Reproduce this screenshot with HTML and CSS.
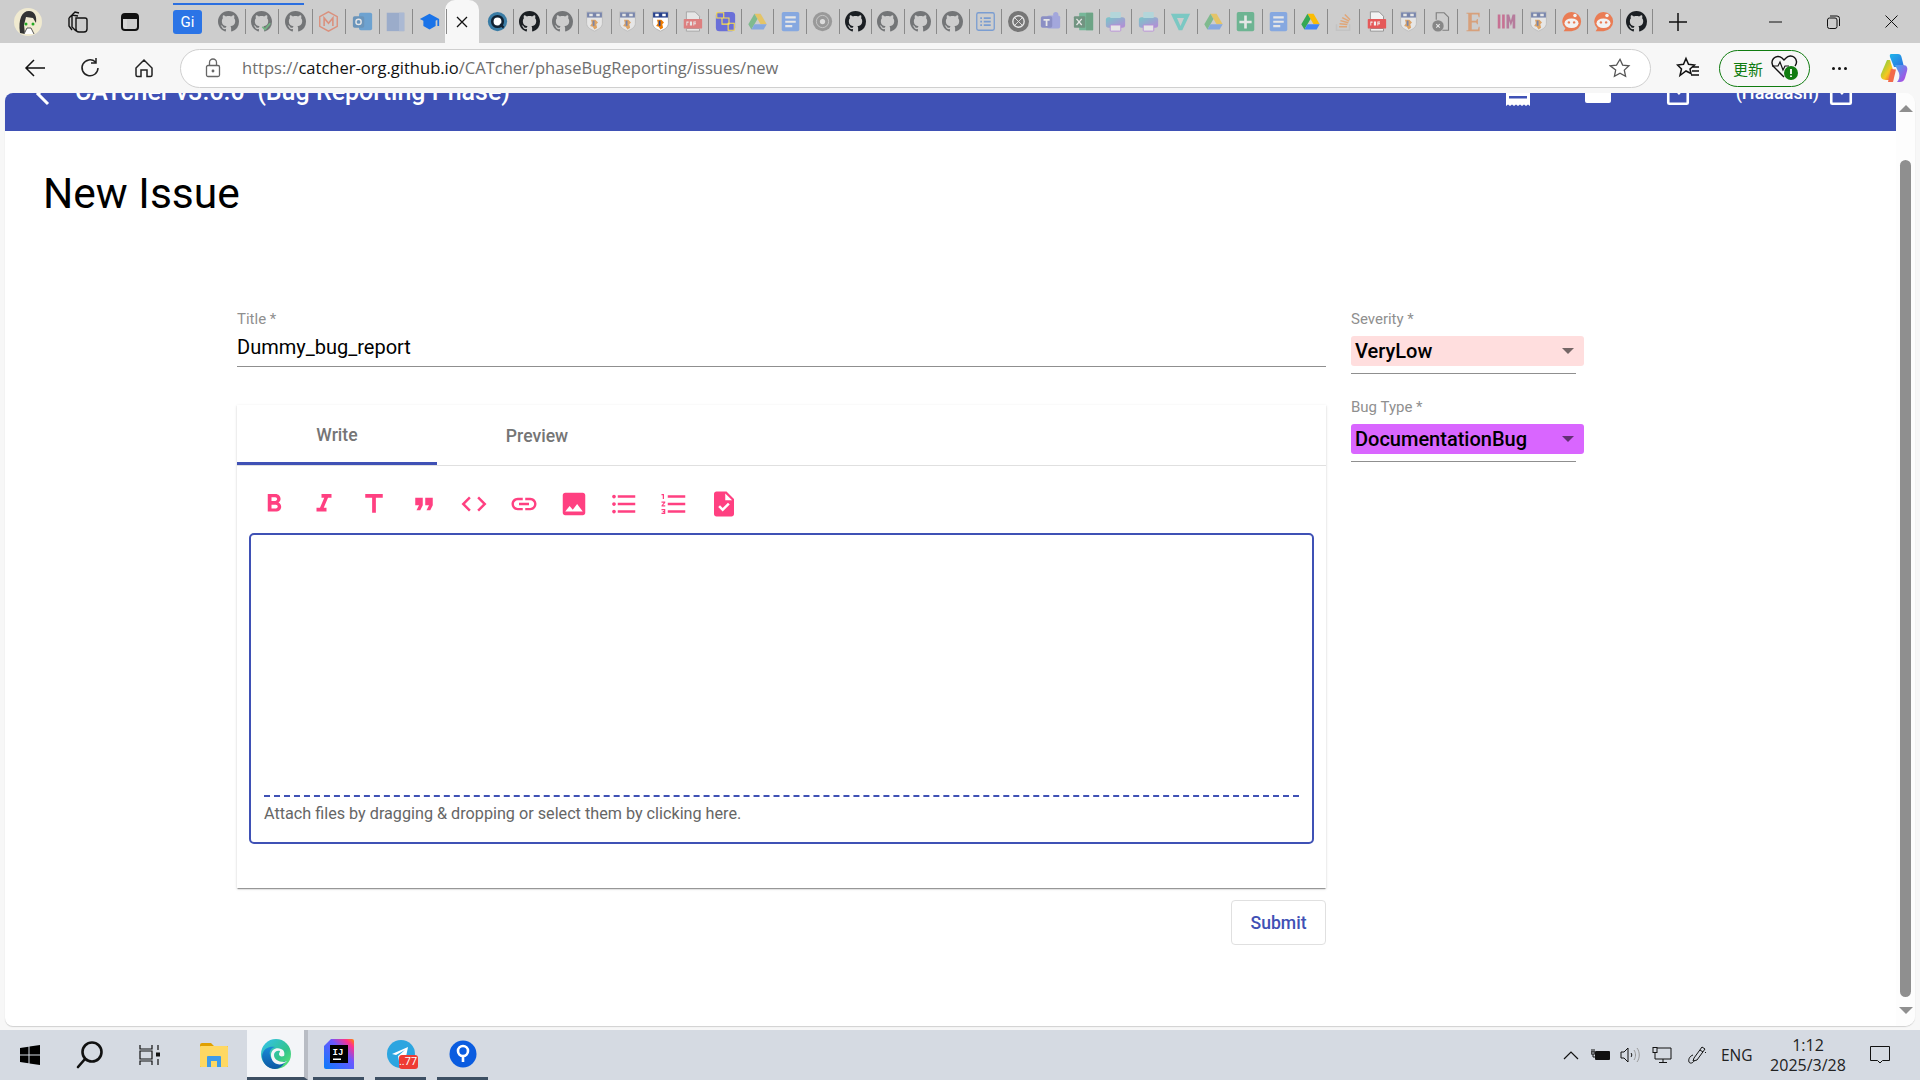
FILE: index.html
```html
<!DOCTYPE html>
<html lang="en">
<head>
    <meta charset="UTF-8">
    <title>CATcher</title>
    <link rel="stylesheet" href="styles.css">
</head>
<body>

<svg class="sprites" xmlns="http://www.w3.org/2000/svg">
    <symbol id="gh" viewBox="0 0 16 16"><path d="M8 0C3.58 0 0 3.58 0 8c0 3.54 2.29 6.53 5.47 7.59.4.07.55-.17.55-.38 0-.19-.01-.82-.01-1.49-2.01.37-2.53-.49-2.69-.94-.09-.23-.48-.94-.82-1.13-.28-.15-.68-.52-.01-.53.63-.01 1.08.58 1.23.82.72 1.21 1.87.87 2.33.66.07-.52.28-.87.51-1.07-1.78-.2-3.64-.89-3.64-3.95 0-.87.31-1.59.82-2.15-.08-.2-.36-1.02.08-2.12 0 0 .67-.21 2.2.82.64-.18 1.32-.27 2-.27s1.36.09 2 .27c1.53-1.04 2.2-.82 2.2-.82.44 1.1.16 1.92.08 2.12.51.56.82 1.27.82 2.15 0 3.07-1.87 3.75-3.65 3.95.29.25.54.73.54 1.48 0 1.07-.01 1.93-.01 2.2 0 .21.15.46.55.38A8.013 8.013 0 0016 8c0-4.42-3.58-8-8-8z"/></symbol>
    <symbol id="crest" viewBox="0 0 24 24"><path d="M3 1h18v13c0 5-5 7-9 9-4-2-9-4-9-9z" fill="#fff" stroke="#aaa"/><path d="M3.500 1.500h17v6h-17z" fill="#27408b"/><path d="M6 3h4v3H6zM14 3h4v3h-4z" fill="#fff"/><path d="M8 10h5l3 3-2 2 1 4-3 2-2-3-3-1 2-3z" fill="#ef7c00"/><path d="M10 11h2v6h-2z" fill="#27408b"/></symbol>
    <symbol id="pdf" viewBox="0 0 24 24"><path d="M5 1h10l5 5v5H5zM5 20h15v3H5z" fill="#fff" stroke="#777"/><rect x="2" y="9" width="21" height="11" rx="1" fill="#e33"/><path d="M5 12h2.500v1.500H6v3H5zM9 12h2.500v4.500H9zM13 12h3v1h-2v1h2v1h-2v1.500h-1z" fill="#fff"/></symbol>
    <symbol id="drive" viewBox="0 0 24 24"><path d="M8.500 3h7l7 12h-7z" fill="#fbbc04"/><path d="M8.500 3l-7 12 3.500 6 7-12z" fill="#34a853"/><path d="M5 21h14l3.500-6H8.500z" fill="#4285f4"/></symbol>
    <symbol id="docs" viewBox="0 0 24 24"><rect x="2" y="1" width="20" height="22" rx="2" fill="#4285f4"/><path d="M6 6h12v2.500H6zM6 11h12v2.500H6zM6 16h8v2.500H6z" fill="#fff"/></symbol>
    <symbol id="printer" viewBox="0 0 24 24"><rect x="1" y="7" width="22" height="12" rx="3" fill="url(#printgrad)"/><rect x="6" y="1" width="12" height="7" rx="1" fill="#9adfe8"/><rect x="6" y="16" width="12" height="7" rx="1" fill="#fff" stroke="#a04ae0"/></symbol>
    <symbol id="reddit" viewBox="0 0 24 24"><path d="M12 1a11 11 0 110 22H3l2-3A11 11 0 0112 1z" fill="#f4622c"/><ellipse cx="12" cy="14" rx="8" ry="5.500" fill="#fff"/><circle cx="9" cy="13" r="1.400" fill="#f4622c"/><circle cx="15" cy="13" r="1.400" fill="#f4622c"/><circle cx="16" cy="5" r="2" fill="#fff"/></symbol>
    <symbol id="outline-box" viewBox="0 0 24 24"><path d="M13 3H4a1 1 0 00-1 1v16a1 1 0 001 1h16a1 1 0 001-1v-9" fill="none" stroke="#fff" stroke-width="2.400"/><path d="M21 3l-9 9M14 3h7v7" fill="none" stroke="#fff" stroke-width="2.400"/></symbol>
    <defs>
        <linearGradient id="printgrad" x1="0" y1="0" x2="1" y2="1"><stop offset="0" stop-color="#27c4c4"/><stop offset="1" stop-color="#a04ae0"/></linearGradient>
    </defs>
</svg>

<div class="tabstrip">
    <div class="profile">
        <svg width="30" height="30" viewBox="0 0 30 30"><circle cx="15" cy="15" r="14" fill="#f0ead0"/><path d="M7 26C5 12 9 4 16 4c6 0 8 6 7 12l-3-5-7-1-2 8 1 9z" fill="#333"/><circle cx="13" cy="17" r="1.500" fill="#2a2"/><circle cx="20" cy="17" r="1.500" fill="#2a2"/><path d="M11 27l3-6h4l3 6" fill="#fff" stroke="#555"/></svg>
    </div>
    <div class="strip-btn">
        <svg width="22" height="24" viewBox="0 0 22 24" fill="none" stroke="#111" stroke-width="1.400"><path d="M5 5l3-3 4 1M2 8l3-3 6 1 0 0M9 8h9a2 2 0 012 2v9a3 3 0 01-3 3h-5a3 3 0 01-3-3zM5 5v12l4 4M2 8v8l3 4"/></svg>
    </div>
    <div class="strip-btn">
        <svg width="20" height="20" viewBox="0 0 20 20"><rect x="2" y="2" width="16" height="16" rx="3" fill="none" stroke="#111" stroke-width="2"/><path d="M2 3h16v4H2z" fill="#111"/><path d="M3 7h4v10H3z" fill="#fff" opacity=".2"/></svg>
    </div>

    <div class="tabgroup">
        <span class="gi-tab">Gi</span>
        <span class="tab"><svg class="fav dim"><use href="#gh"/></svg></span>
        <span class="tab"><svg class="fav dim" viewBox="0 0 24 24"><use href="#gh" width="24" height="24"/><path d="M13 18l3 3 6-7" fill="none" stroke="#1a9c3c" stroke-width="2"/></svg></span>
        <span class="tab"><svg class="fav dim"><use href="#gh"/></svg></span>
        <span class="tab"><svg class="fav dim" viewBox="0 0 24 24"><path d="M12 1l10 5.500v11L12 23 2 17.500v-11z" fill="none" stroke="#e8552f" stroke-width="1.600"/><path d="M7 17V8l5 6 5-6v9" fill="none" stroke="#e8552f" stroke-width="1.800"/></svg></span>
        <span class="tab"><svg class="fav dim" viewBox="0 0 24 24"><rect x="8" y="2" width="15" height="20" rx="2" fill="#0f78d4"/><rect x="1" y="6" width="13" height="13" rx="2" fill="#0a5da8"/><circle cx="7.500" cy="12.500" r="3" fill="none" stroke="#fff" stroke-width="1.600"/></svg></span>
        <span class="tab"><svg class="fav dim" viewBox="0 0 24 24"><rect x="2" y="2" width="20" height="21" fill="#6b8cc9"/><path d="M16 2h6v21h-6z" fill="#8ba6d9"/></svg></span>
        <span class="tab"><svg class="fav" viewBox="0 0 24 24"><path d="M12 3L1 9l4 2.200v6L12 21l7-3.800v-6l2-1.100V17h2V9z" fill="#1a73e8"/></svg></span>
    </div>

    <div class="tab-active">
        <svg width="14" height="14" viewBox="0 0 14 14"><path d="M2 2l10 10M12 2L2 12" stroke="#111" stroke-width="1.300"/></svg>
    </div>

    <div class="tabgroup tabgroup-rest">
        <span class="tab"><svg class="fav" viewBox="0 0 24 24"><circle cx="12" cy="12" r="11" fill="#3a7ca5"/><circle cx="12" cy="12" r="6" fill="#fff" stroke="#123" stroke-width="3"/><path d="M15 15l4 4" stroke="#123" stroke-width="2.500"/></svg></span>
        <span class="tab"><svg class="fav"><use href="#gh"/></svg></span>
        <span class="tab"><svg class="fav dim"><use href="#gh"/></svg></span>
        <span class="tab"><svg class="fav dim"><use href="#crest"/></svg></span>
        <span class="tab"><svg class="fav dim"><use href="#crest"/></svg></span>
        <span class="tab"><svg class="fav"><use href="#crest"/></svg></span>
        <span class="tab"><svg class="fav dim"><use href="#pdf"/></svg></span>
        <span class="tab"><svg class="fav" viewBox="0 0 24 24"><rect x="1" y="1" width="22" height="22" rx="4" fill="#6a6fd8"/><path d="M2 2h8v6H2zM8 8h8v7H8zM15 14h7v8h-7z" fill="none" stroke="#ffe24a" stroke-width="1.200"/></svg></span>
        <span class="tab"><svg class="fav dim"><use href="#drive"/></svg></span>
        <span class="tab"><svg class="fav dim"><use href="#docs"/></svg></span>
        <span class="tab"><svg class="fav dim" viewBox="0 0 24 24"><circle cx="12" cy="12" r="11" fill="#666"/><circle cx="12" cy="12" r="7" fill="none" stroke="#ccc"/><circle cx="12" cy="12" r="3" fill="#eee"/></svg></span>
        <span class="tab"><svg class="fav"><use href="#gh"/></svg></span>
        <span class="tab"><svg class="fav dim"><use href="#gh"/></svg></span>
        <span class="tab"><svg class="fav dim"><use href="#gh"/></svg></span>
        <span class="tab"><svg class="fav dim"><use href="#gh"/></svg></span>
        <span class="tab"><svg class="fav dim" viewBox="0 0 24 24"><rect x="2" y="2" width="20" height="20" rx="2" fill="none" stroke="#2a6fd6" stroke-width="1.500"/><path d="M6 7h2v2H6zM10 7h8v2h-8zM6 11h2v2H6zM10 11h8v2h-8zM6 15h2v2H6zM10 15h8v2h-8z" fill="#2a6fd6"/></svg></span>
        <span class="tab"><svg class="fav dim" viewBox="0 0 24 24"><circle cx="12" cy="12" r="12" fill="#222"/><circle cx="12" cy="12" r="6.500" fill="none" stroke="#fff" stroke-width="1.600"/><path d="M8 8l8 8M16 8l-8 8" stroke="#fff"/></svg></span>
        <span class="tab"><svg class="fav dim" viewBox="0 0 24 24"><rect x="8" y="5" width="15" height="15" rx="2" fill="#7b83eb"/><circle cx="18" cy="4" r="3" fill="#7b83eb"/><rect x="1" y="6" width="13" height="13" rx="2" fill="#4b53bc"/><path d="M4 9h7v2H8.500v6h-2v-6H4z" fill="#fff"/></svg></span>
        <span class="tab"><svg class="fav dim" viewBox="0 0 24 24"><rect x="7" y="2" width="16" height="20" rx="1" fill="#21a366"/><path d="M15 2h8v20h-8z" fill="#107c41"/><rect x="1" y="6" width="13" height="13" rx="1" fill="#185c37"/><path d="M4 9l6 7M10 9l-6 7" stroke="#fff" stroke-width="1.500"/></svg></span>
        <span class="tab"><svg class="fav dim"><use href="#printer"/></svg></span>
        <span class="tab"><svg class="fav dim"><use href="#printer"/></svg></span>
        <span class="tab"><svg class="fav dim" viewBox="0 0 24 24"><path d="M1 3h22l-9 19h-4z" fill="#2bc4bb"/><path d="M8 8h8l-4 9z" fill="#ccc"/></svg></span>
        <span class="tab"><svg class="fav dim"><use href="#drive"/></svg></span>
        <span class="tab"><svg class="fav dim" viewBox="0 0 24 24"><rect x="2" y="1" width="20" height="22" rx="2" fill="#0f9d58"/><path d="M10.500 5h3v6H19v3h-5.500v6h-3v-6H5v-3h5.500z" fill="#fff"/></svg></span>
        <span class="tab"><svg class="fav dim"><use href="#docs"/></svg></span>
        <span class="tab"><svg class="fav"><use href="#drive"/></svg></span>
        <span class="tab"><svg class="fav dim" viewBox="0 0 24 24"><path d="M4 15v7h15v-7" fill="none" stroke="#bbb" stroke-width="1.600"/><path d="M7 18h9M7.500 14.500l9 1M8.500 11l9 2.500M10.500 7.500l8 4M13.500 4l6 6" stroke="#f48024" stroke-width="1.700"/></svg></span>
        <span class="tab"><svg class="fav soft"><use href="#pdf"/></svg></span>
        <span class="tab"><svg class="fav dim"><use href="#crest"/></svg></span>
        <span class="tab"><svg class="fav dim" viewBox="0 0 24 24"><path d="M6 10V2h9l5 5v15h-7" fill="none" stroke="#333" stroke-width="1.300"/><circle cx="8" cy="17" r="6.500" fill="#444"/><path d="M6 15l4 4M10 15l-4 4" stroke="#fff" stroke-width="1.300"/></svg></span>
        <span class="tab"><svg class="fav dim" viewBox="0 0 24 24"><path d="M4 2h15v5h-1l-1-3h-7v7h5l1-2h1v6h-1l-1-2h-5v8h7l1-3h1v5H4v-1h2V3H4z" fill="#e2752b"/></svg></span>
        <span class="tab"><svg class="fav dim" viewBox="0 0 24 24"><path d="M2 4h3v16H2zM7 4h3v16H7z" fill="#c2185b"/><path d="M12 4h3l2 7 2-7h3v16h-3V11l-2 6-2-6v9h-3z" fill="#a02c6c"/></svg></span>
        <span class="tab"><svg class="fav dim"><use href="#crest"/></svg></span>
        <span class="tab"><svg class="fav soft"><use href="#reddit"/></svg></span>
        <span class="tab"><svg class="fav soft"><use href="#reddit"/></svg></span>
        <span class="tab"><svg class="fav"><use href="#gh"/></svg></span>
    </div>

    <div class="new-tab">
        <svg width="18" height="18" viewBox="0 0 18 18"><path d="M9 0v18M0 9h18" stroke="#111" stroke-width="1.500"/></svg>
    </div>

    <div class="window-btns">
        <svg width="13" height="2" viewBox="0 0 13 2"><path d="M0 1h13" stroke="#111"/></svg>
        <svg width="13" height="14" viewBox="0 0 13 14" fill="none" stroke="#111"><rect x=".5" y="3" width="9.500" height="10.500" rx="2"/><path d="M3 1h7a2.500 2.500 0 012.500 2.500V11"/></svg>
        <svg width="13" height="13" viewBox="0 0 13 13"><path d="M.5.500l12 12M12.500.500l-12 12" stroke="#111"/></svg>
    </div>
</div>

<div class="toolbar">
    <div class="nav-btns">
        <svg width="22" height="20" viewBox="0 0 22 20" fill="none" stroke="#111" stroke-width="1.500"><path d="M21 10H2M10 2l-8 8 8 8"/></svg>
        <svg width="22" height="22" viewBox="0 0 22 22" fill="none" stroke="#222" stroke-width="1.500"><path d="M19 11a8 8 0 11-2.500-6M17 1v5h-5"/></svg>
        <svg width="20" height="20" viewBox="0 0 20 20" fill="none" stroke="#222" stroke-width="1.500"><path d="M2 10l8-8 8 8v7a1.500 1.500 0 01-1.500 1.500H13V12H7v6.500H3.500A1.500 1.500 0 012 17zM7 12h6"/></svg>
    </div>
    <div class="address">
        <svg class="lock" width="16" height="20" viewBox="0 0 16 20" fill="none" stroke="#666" stroke-width="1.300"><rect x="1.500" y="7.500" width="13" height="11" rx="1.500"/><path d="M4.500 7.500V4.500a3.500 3.500 0 017 0v3"/><circle cx="8" cy="13" r=".8" fill="#666"/></svg>
        <span class="url">https://<b>catcher-org.github.io</b>/CATcher/phaseBugReporting/issues/new</span>
        <svg class="star" width="22" height="22" viewBox="0 0 24 24" fill="none" stroke="#555" stroke-width="1.400"><path d="M12 2.500l2.900 6.300 6.900.8-5.100 4.700 1.400 6.800-6.100-3.400-6.100 3.400 1.400-6.800L1.300 9.600l6.900-.8z"/></svg>
    </div>
    <svg class="fav-btn" width="24" height="24" viewBox="0 0 24 24" fill="none" stroke="#111" stroke-width="1.500"><path d="M10 2.500l2.500 5.800 6 .7-4.500 4 1 4.500-5-2.500-6 4.500 1.500-6.500L1.500 9l6-.7zM17 11h6M16 15h7M15 19h8"/></svg>
    <div class="update-pill">
        <span>更新</span>
        <svg width="28" height="26" viewBox="0 0 28 26"><path d="M13 22L3 12a6 6 0 018-9l2 2 2-2a6 6 0 019 8" fill="none" stroke="#111" stroke-width="1.400"/><path d="M1 11h6l2-4 3 8 2-4h4" fill="none" stroke="#111" stroke-width="1.200"/><circle cx="20" cy="18" r="7" fill="#107c10"/><path d="M20 14v5M20 20.500v1.500" stroke="#fff" stroke-width="1.800"/></svg>
    </div>
    <div class="more-btn"><i></i><i></i><i></i></div>
    <svg class="copilot" width="28" height="30" viewBox="0 0 28 30">
        <defs>
            <linearGradient id="copa" x1="0" y1="0" x2="1" y2="1"><stop offset="0" stop-color="#1fb5ea"/><stop offset="1" stop-color="#2b6fe0"/></linearGradient>
            <linearGradient id="copb" x1="0" y1="0" x2="1" y2="1"><stop offset="0" stop-color="#63d14c"/><stop offset=".6" stop-color="#f6c81f"/><stop offset="1" stop-color="#f0503f"/></linearGradient>
            <linearGradient id="copc" x1="0" y1="0" x2="1" y2="1"><stop offset="0" stop-color="#3fa7f0"/><stop offset="1" stop-color="#c13de0"/></linearGradient>
        </defs>
        <path d="M11 1h7c2 0 3 1 3.500 3L24 14H14L10 4c-.5-2 0-3 1-3z" fill="url(#copa)"/>
        <path d="M7 7h3l3 10-3 10H6c-4 0-6-3-5-6z" fill="url(#copb)"/>
        <path d="M15 12h8c4 0 5 3 4 6l-2 7c-1 3-3 4-5 4h-3c2-2 3-6 2-9z" fill="url(#copc)"/>
        <path d="M11 16l5 .5-3 12.500h-5z" fill="#f26a4b"/>
    </svg>
</div>

<div class="page">
    <div class="content">
        <header class="app-bar">
            <svg class="back-icon" width="22" height="26" viewBox="0 0 22 26"><path d="M15 3L5 13l10 10" fill="none" stroke="#fff" stroke-width="3"/></svg>
            <span class="app-title">CATcher v3.6.0 &nbsp;(Bug Reporting Phase)</span>
            <div class="app-actions">
                <span class="app-action"><svg width="26" height="26" viewBox="0 0 26 26"><path d="M1 1h24v24l-2-1.500-2 1.500-2-1.500-2 1.500-2-1.500-2 1.500-2-1.500-2 1.500-2-1.500-2 1.500-2-1.500-2 1.500z" fill="#fff"/><path d="M4 8h18v2.500H4zM4 15h18v2.500H4z" fill="#3f51b5"/></svg></span>
                <span class="app-action"><svg width="26" height="26" viewBox="0 0 26 26"><rect x="0" y="0" width="26" height="22" rx="2" fill="#fff"/></svg></span>
                <span class="app-action"><svg width="26" height="26"><use href="#outline-box"/></svg></span>
                <span class="app-user">(Haaaash)</span>
                <svg width="26" height="26"><use href="#outline-box"/></svg>
            </div>
        </header>

        <h1 class="page-title">New Issue</h1>

        <div class="issue-form">
            <div class="main-col">
                <label class="field-label">Title *</label>
                <div class="title-input">Dummy_bug_report</div>

                <div class="editor-card">
                    <div class="editor-tabs">
                        <span class="editor-tab editor-tab-active">Write</span>
                        <span class="editor-tab">Preview</span>
                    </div>
                    <div class="md-toolbar">
                        <svg class="md-icon" viewBox="0 0 24 24"><path d="M15.600 10.790c.97-.67 1.650-1.770 1.650-2.790 0-2.260-1.750-4-4-4H7v14h7.040c2.090 0 3.710-1.700 3.710-3.790 0-1.520-.86-2.820-2.150-3.420zM10 6.500h3c.83 0 1.500.67 1.500 1.500s-.67 1.500-1.500 1.500h-3v-3zm3.500 9H10v-3h3.500c.83 0 1.500.67 1.500 1.500s-.67 1.500-1.500 1.500z"/></svg>
                        <svg class="md-icon" viewBox="0 0 24 24"><path d="M10 4v3h2.210l-3.420 8H6v3h8v-3h-2.210l3.420-8H18V4z"/></svg>
                        <svg class="md-icon" viewBox="0 0 24 24"><path d="M5 4v3h5.500v12h3V7H19V4z"/></svg>
                        <svg class="md-icon" viewBox="0 0 24 24"><path d="M6 17h3l2-4V7H5v6h3zm8 0h3l2-4V7h-6v6h3z"/></svg>
                        <svg class="md-icon" viewBox="0 0 24 24"><path d="M9.400 16.600L4.800 12l4.600-4.600L8 6l-6 6 6 6 1.400-1.400zm5.200 0l4.600-4.600-4.600-4.600L16 6l6 6-6 6-1.400-1.400z"/></svg>
                        <svg class="md-icon" viewBox="0 0 24 24"><path d="M3.900 12c0-1.710 1.390-3.100 3.100-3.100h4V7H7c-2.760 0-5 2.240-5 5s2.240 5 5 5h4v-1.900H7c-1.710 0-3.100-1.390-3.100-3.100zM8 13h8v-2H8v2zm9-6h-4v1.900h4c1.710 0 3.100 1.390 3.100 3.100s-1.390 3.100-3.100 3.100h-4V17h4c2.760 0 5-2.240 5-5s-2.240-5-5-5z"/></svg>
                        <svg class="md-icon" viewBox="0 0 24 24"><path d="M21 19V5c0-1.100-.9-2-2-2H5c-1.100 0-2 .9-2 2v14c0 1.100.9 2 2 2h14c1.100 0 2-.9 2-2zM8.500 13.500l2.500 3.010L14.500 12l4.500 6H5l3.500-4.500z"/></svg>
                        <svg class="md-icon" viewBox="0 0 24 24"><path d="M4 10.500c-.83 0-1.500.67-1.500 1.500s.67 1.500 1.500 1.500 1.500-.67 1.500-1.500-.67-1.500-1.500-1.500zm0-6c-.83 0-1.500.67-1.500 1.500S3.170 7.500 4 7.500 5.500 6.830 5.500 6 4.830 4.500 4 4.500zm0 12c-.83 0-1.500.68-1.500 1.500s.68 1.500 1.500 1.500 1.500-.68 1.500-1.500-.67-1.500-1.500-1.500zM7 19h14v-2H7v2zm0-6h14v-2H7v2zm0-8v2h14V5H7z"/></svg>
                        <svg class="md-icon" viewBox="0 0 24 24"><path d="M2 17h2v.5H3v1h1v.5H2v1h3v-4H2v1zm1-9h1V4H2v1h1v3zm-1 3h1.800L2 13.100v.9h3v-1H3.200L5 10.900V10H2v1zm5-6v2h14V5H7zm0 14h14v-2H7v2zm0-6h14v-2H7v2z"/></svg>
                        <svg class="md-icon" viewBox="0 0 24 24"><path d="M14 2H6c-1.100 0-1.990.9-1.990 2L4 20c0 1.100.89 2 1.990 2H18c1.100 0 2-.9 2-2V8l-6-6zm-3.060 16L7.400 14.460l1.410-1.410 2.120 2.120 4.240-4.240 1.410 1.410L10.940 18zM13 9V3.500L18.500 9H13z"/></svg>
                    </div>
                    <div class="editor-box">
                        <div class="editor-area"></div>
                        <div class="attach-hint">Attach files by dragging &amp; dropping or select them by clicking here.</div>
                    </div>
                </div>

                <div class="form-actions">
                    <button class="submit-btn">Submit</button>
                </div>
            </div>

            <div class="side-col">
                <div class="select-field">
                    <label class="field-label">Severity *</label>
                    <div class="select-box select-severity"><span>VeryLow</span><i class="select-arrow"></i></div>
                    <div class="select-line"></div>
                </div>
                <div class="select-field">
                    <label class="field-label">Bug Type *</label>
                    <div class="select-box select-type"><span>DocumentationBug</span><i class="select-arrow"></i></div>
                    <div class="select-line"></div>
                </div>
            </div>
        </div>
    </div>

    <div class="scrollbar">
        <i class="scroll-up"></i>
        <i class="scroll-thumb"></i>
        <i class="scroll-down"></i>
    </div>
</div>

<footer class="taskbar">
    <div class="task-cell">
        <svg width="20" height="20" viewBox="0 0 20 20"><path d="M0 3l8.500-1.300V9.500H0zM9.500 1.500L20 0v9.500H9.500zM0 10.500h8.500v7.800L0 17zM9.500 10.500H20V20L9.500 18.500z" fill="#000"/></svg>
    </div>
    <div class="task-cell">
        <svg width="28" height="30" viewBox="0 0 28 30" fill="none" stroke="#111" stroke-width="2.600"><circle cx="16" cy="12" r="9.500"/><path d="M9 19l-7 8" stroke-linecap="round"/></svg>
    </div>
    <div class="task-cell">
        <svg width="22" height="20" viewBox="0 0 22 20" fill="none" stroke="#111" stroke-width="1.200"><path d="M1 0v4h12V0M1 6h12v8H1zM1 20v-4h12v4M19 0v5M19 14v6"/><rect x="17" y="7.500" width="4" height="4" fill="#111" stroke="none"/></svg>
    </div>
    <div class="task-cell task-cell-folder">
        <svg width="28" height="24" viewBox="0 0 28 24"><path d="M0 2a2 2 0 012-2h9l3 3h14v21H0z" fill="#e0a000"/><rect x="0" y="3" width="28" height="21" rx="1" fill="#ffd862"/><path d="M8 13h12a1 1 0 011 1v10h-4v-6h-6v6H7V14a1 1 0 011-1z" fill="#3f9be8"/></svg>
    </div>
    <div class="task-cell task-edge">
        <svg width="30" height="30" viewBox="0 0 30 30">
            <defs>
                <linearGradient id="edgea" x1="0" y1="0" x2="1" y2="1"><stop offset="0" stop-color="#35c1f1"/><stop offset=".6" stop-color="#31c48d"/><stop offset="1" stop-color="#66eb6e"/></linearGradient>
                <linearGradient id="edgeb" x1="0" y1="0" x2="0" y2="1"><stop offset="0" stop-color="#1a8ad8"/><stop offset="1" stop-color="#0c59a4"/></linearGradient>
            </defs>
            <circle cx="15" cy="15" r="15" fill="url(#edgea)"/>
            <path d="M1 17C2 9 9 7 14 8c-4 1-6 4-5 8 1 6 8 9 16 6-3 5-7 8-11 8-7 0-13-6-13-13z" fill="url(#edgeb)"/>
            <path d="M10 16c0-5 5-8 10-6 3 1 4 4 3 7-3 1-5 0-5-2 0-1 1-2 1-3-3-1-6 1-6 4 0 4 4 7 10 7l3-1c-3 3-7 4-10 3-4-1-6-5-6-9z" fill="#f3f5f8"/>
        </svg>
    </div>
    <div class="task-cell task-app">
        <svg width="30" height="30" viewBox="0 0 30 30">
            <defs><linearGradient id="ijg" x1="0" y1="1" x2="1" y2="0"><stop offset="0" stop-color="#087cfa"/><stop offset=".6" stop-color="#6b57ff"/><stop offset=".85" stop-color="#ff318c"/><stop offset="1" stop-color="#ff8a00"/></linearGradient></defs>
            <path d="M7 0h21a2 2 0 012 2v28H2a2 2 0 01-2-2V7z" fill="url(#ijg)"/>
            <rect x="6" y="6" width="18" height="18" fill="#000"/>
            <path d="M9 19.500h8v1.500H9z" fill="#fff"/>
            <text x="8.500" y="15.500" class="ij-text">IJ</text>
        </svg>
    </div>
    <div class="task-cell task-app">
        <div class="tg-wrap">
            <svg width="28" height="28" viewBox="0 0 28 28"><circle cx="14" cy="14" r="14" fill="#2ca5e0"/><path d="M5 14L21 7l-3 15-4-3-2 2-1-5 7-6-9 5z" fill="#fff"/></svg>
            <span class="tg-badge">..77</span>
        </div>
    </div>
    <div class="task-cell task-app">
        <svg width="28" height="28" viewBox="0 0 28 28"><circle cx="14" cy="14" r="13.500" fill="#0a5ce0"/><circle cx="14" cy="11" r="5" fill="none" stroke="#fff" stroke-width="2.600"/><path d="M14 15v7" stroke="#fff" stroke-width="2.600"/></svg>
    </div>

    <div class="tray">
        <svg class="tray-chevron" width="16" height="9" viewBox="0 0 16 9"><path d="M1 8l7-7 7 7" fill="none" stroke="#111" stroke-width="1.200"/></svg>
        <svg class="tray-battery" width="20" height="12" viewBox="0 0 20 12"><path d="M1 0v3M3 0v3M0 3h4v2H0zM2 5v3h2" stroke="#111" fill="none"/><rect x="4" y="2" width="15" height="9" rx="1" fill="#111"/></svg>
        <svg class="tray-sound" width="20" height="16" viewBox="0 0 20 16" fill="none" stroke="#111"><path d="M1 5h3l4-4v14l-4-4H1z"/><path d="M11 6c1 1 1 3 0 4" /><path d="M14 3c2 3 2 7 0 10M17 1c3 4 3 10 0 14" stroke="#999"/></svg>
        <svg class="tray-net" width="20" height="16" viewBox="0 0 20 16" fill="none" stroke="#111"><path d="M5 1h14v11H3V3M11 12v3M7 15.500h8"/><rect x="1" y=".5" width="4" height="5" fill="#d5dae2"/></svg>
        <svg class="tray-pen" width="20" height="20" viewBox="0 0 20 20" fill="none" stroke="#111"><path d="M7 13L15 2l3 2-8 11-4 1zM13 5l3 2M18 7l1 1"/><path d="M6 10c-3 1-5 4-4 7 1 2 4 1 5-1"/></svg>
        <span class="tray-lang">ENG</span>
        <div class="tray-clock"><span>1:12</span><span>2025/3/28</span></div>
        <svg class="tray-notify" width="20" height="18" viewBox="0 0 20 18"><path d="M.5.500h19v14h-7L10 17l-2.500-2.500h-7z" fill="none" stroke="#111"/></svg>
    </div>
</footer>

</body>
</html>
```

FILE: styles.css
```css
body {
    margin: 0;
    width: 1920px;
    height: 1080px;
    overflow: hidden;
    display: flex;
    flex-direction: column;
    background-color: #f7f7f7;
    font-family: Roboto, sans-serif;
}
.sprites {
    width: 0;
    height: 0;
    flex-shrink: 0;
}

/* tab strip */
.tabstrip {
    height: 43px;
    flex-shrink: 0;
    display: flex;
    align-items: center;
    background-color: #cdcdcd;
}
.profile {
    width: 30px;
    height: 30px;
    margin-left: 13px;
}
.strip-btn {
    width: 52px;
    display: flex;
    justify-content: center;
}
.strip-btn:nth-child(2) {
    margin-left: 9px;
}
.tabgroup {
    display: flex;
    align-items: center;
    height: 43px;
    margin-left: 17px;
    position: relative;
}
.tabgroup:not(.tabgroup-rest)::before {
    content: "";
    position: absolute;
    left: 0;
    top: 3px;
    width: 131px;
    height: 2px;
    background-color: #2b6fe0;
}
.tabgroup-rest {
    margin-left: 3px;
}
.tabgroup-rest .tab {
    width: 32.55px;
}
.gi-tab {
    width: 29px;
    height: 24px;
    margin: 1px 10px 0 0;
    border-radius: 3px;
    background-color: #2b74e6;
    color: #fff;
    font-size: 15px;
    line-height: 24px;
    text-align: center;
}
.tab {
    width: 33.5px;
    height: 25px;
    box-sizing: border-box;
    border-right: 1px solid #8a8a8a;
    display: flex;
    justify-content: center;
    align-items: center;
}
.fav {
    width: 21px;
    height: 21px;
    fill: #1b1f23;
}
.dim {
    opacity: .5;
}
.soft {
    opacity: .75;
}
.tab-active {
    width: 34px;
    height: 43px;
    margin-left: -2px;
    border-radius: 10px 10px 0 0;
    background-color: #f7f7f7;
    display: flex;
    justify-content: center;
    align-items: center;
}
.new-tab {
    margin-left: 16px;
    display: flex;
}
.window-btns {
    margin-left: auto;
    width: 151px;
    padding-right: 22px;
    box-sizing: border-box;
    display: flex;
    justify-content: space-between;
    align-items: center;
}

/* browser toolbar */
.toolbar {
    height: 50px;
    flex-shrink: 0;
    display: flex;
    align-items: center;
    background-color: #f7f7f7;
}
.nav-btns {
    width: 178px;
    margin-right: 2px;
    padding: 0 24px;
    box-sizing: border-box;
    display: flex;
    justify-content: space-between;
    align-items: center;
}
.address {
    width: 1471px;
    height: 39px;
    box-sizing: border-box;
    border: 1px solid #cfcfcf;
    border-radius: 20px;
    background-color: #fff;
    display: flex;
    align-items: center;
}
.lock {
    margin-left: 24px;
}
.url {
    margin: -2px 0 0 21px;
    font-family: "Open Sans", sans-serif;
    font-size: 16.55px;
    color: #6f6f6f;
}
.url b {
    font-weight: 400;
    color: #111;
}
.star {
    margin-left: auto;
    margin-right: 19px;
}
.fav-btn {
    margin-left: 25px;
}
.update-pill {
    width: 91px;
    height: 37px;
    margin-left: 19px;
    box-sizing: border-box;
    border: 1.5px solid #107c10;
    border-radius: 19px;
    display: flex;
    align-items: center;
    justify-content: space-between;
    padding: 0 10px 0 13px;
    color: #107c10;
    font-family: "Noto Sans CJK SC", sans-serif;
    font-size: 15px;
}
.more-btn {
    margin-left: 22px;
    display: flex;
    gap: 3px;
}
.more-btn i {
    width: 3px;
    height: 3px;
    border-radius: 50%;
    background-color: #111;
}
.copilot {
    margin-left: 33px;
}

/* page */
.page {
    height: 933px;
    width: 1910px;
    margin-left: 5px;
    flex-shrink: 0;
    display: flex;
    background-color: #fff;
    border-radius: 8px 10px 10px 8px;
    box-shadow: 0 1px 1px #d0d0d0;
    overflow: hidden;
}
.content {
    width: 1891px;
    flex-shrink: 0;
}
.app-bar {
    height: 69px;
    margin-top: -31px;
    box-sizing: border-box;
    padding-top: 19px;
    display: flex;
    align-items: flex-start;
    background-color: #3f51b5;
    color: #fff;
}
.back-icon {
    margin-left: 28px;
}
.app-title {
    margin: -2px 0 0 20px;
    font-size: 25px;
    font-weight: 500;
    line-height: 26px;
}
.app-actions {
    margin-left: auto;
    padding-right: 42px;
    display: flex;
    align-items: flex-start;
}
.app-action {
    width: 80px;
    display: flex;
    justify-content: center;
}
.app-user {
    margin: 0 9px 0 18px;
    font-size: 18px;
    font-weight: 500;
    line-height: 24px;
}
.page-title {
    margin: 38px 0 0 38px;
    font-size: 42.5px;
    font-weight: 400;
    line-height: 50px;
    color: #000;
}
.issue-form {
    margin: 92px 0 0 232px;
    display: flex;
    gap: 25px;
}
.main-col {
    width: 1089px;
}
.field-label {
    display: block;
    font-size: 15px;
    line-height: 16px;
    color: #8f8f8f;
}
.title-input {
    height: 40px;
    box-sizing: border-box;
    border-bottom: 1px solid #8f8f8f;
    font-size: 20px;
    line-height: 28px;
    padding-top: 6px;
    color: #000;
}
.editor-card {
    margin-top: 38px;
    height: 483px;
    display: flex;
    flex-direction: column;
    background-color: #fff;
    box-shadow: 0 2px 1px -1px rgba(0, 0, 0, .25), 0 1px 1px rgba(0, 0, 0, .14), 0 1px 3px rgba(0, 0, 0, .12);
}
.editor-tabs {
    height: 61px;
    flex-shrink: 0;
    box-sizing: border-box;
    border-bottom: 1px solid #e0e0e0;
    display: flex;
}
.editor-tab {
    width: 200px;
    height: 60px;
    box-sizing: border-box;
    padding-top: 2px;
    display: flex;
    justify-content: center;
    align-items: center;
    font-size: 17.6px;
    font-weight: 500;
    color: #757575;
}
.editor-tab-active {
    border-bottom: 3px solid #3f51b5;
}
.md-toolbar {
    height: 67px;
    flex-shrink: 0;
    box-sizing: border-box;
    padding: 8px 0 0 12px;
    display: flex;
    align-items: center;
}
.md-icon {
    width: 30px;
    height: 30px;
    padding: 0 10px;
    fill: #ff4081;
}
.editor-box {
    height: 311px;
    margin: 0 12px;
    box-sizing: border-box;
    border: 2px solid #3f51b5;
    border-radius: 5px;
    padding: 0 13px;
    display: flex;
    flex-direction: column;
}
.editor-area {
    height: 260px;
    flex-shrink: 0;
    border-bottom: 2px dashed #3f51b5;
}
.attach-hint {
    margin-top: 7px;
    font-size: 16.2px;
    line-height: 20px;
    color: #666;
}
.form-actions {
    margin-top: 12px;
    display: flex;
    justify-content: flex-end;
}
.submit-btn {
    width: 95px;
    height: 45px;
    border: 1px solid #e0e0e0;
    border-radius: 4px;
    background-color: #fff;
    color: #3f51b5;
    font-family: Roboto, sans-serif;
    font-size: 17.6px;
    font-weight: 500;
}
.side-col {
    width: 233px;
}
.select-field {
    height: 88px;
}
.select-box {
    height: 30px;
    margin-top: 9px;
    padding: 0 10px 0 4px;
    border-radius: 3px;
    display: flex;
    align-items: center;
    justify-content: space-between;
    font-size: 20px;
    font-weight: 500;
    color: #000;
}
.select-severity {
    background-color: #ffdede;
}
.select-type {
    background-color: #d966ff;
}
.select-arrow {
    width: 0;
    height: 0;
    border-left: 6px solid transparent;
    border-right: 6px solid transparent;
    border-top: 6px solid rgba(0, 0, 0, .54);
}
.select-line {
    width: 225px;
    height: 1px;
    margin-top: 7px;
    background-color: #8f8f8f;
}

/* page scrollbar */
.scrollbar {
    width: 19px;
    flex-shrink: 0;
    background-color: #fdfdfd;
    display: flex;
    flex-direction: column;
    align-items: center;
}
.scroll-up {
    margin-top: 12px;
    border-left: 7px solid transparent;
    border-right: 7px solid transparent;
    border-bottom: 7px solid #8f8f8f;
}
.scroll-thumb {
    width: 11px;
    height: 837px;
    margin-top: 48px;
    border-radius: 6px;
    background-color: #8f8f8f;
}
.scroll-down {
    margin-top: 10px;
    border-left: 7px solid transparent;
    border-right: 7px solid transparent;
    border-top: 7px solid #8f8f8f;
}

/* windows taskbar */
.taskbar {
    height: 50px;
    margin-top: 4px;
    flex-shrink: 0;
    display: flex;
    background-color: #d5dae2;
}
.task-cell {
    width: 60px;
    height: 50px;
    box-sizing: border-box;
    display: flex;
    justify-content: center;
    align-items: center;
}
.task-cell-folder {
    width: 67px;
}
.task-edge {
    width: 61px;
    background-color: #f3f5f8;
    border-bottom: 3px solid #3d4f63;
    border-right: 4px solid #b8bcc4;
}
.task-app {
    width: 51px;
    margin-left: 11px;
    border-bottom: 3px solid #3d4f63;
}
.task-edge + .task-app {
    margin-left: 5px;
}
.tg-wrap {
    position: relative;
    height: 28px;
}
.tg-badge {
    position: absolute;
    left: 12px;
    top: 15px;
    width: 19px;
    height: 14px;
    border-radius: 3px;
    background-color: #ee3b33;
    color: #fff;
    font-size: 11px;
    line-height: 14px;
    text-align: center;
}
.ij-text {
    font-family: "Liberation Mono", monospace;
    font-size: 9px;
    font-weight: 700;
    fill: #fff;
}
.tray {
    margin-left: auto;
    width: 360px;
    box-sizing: border-box;
    display: flex;
    align-items: center;
    color: #222;
}
.tray-chevron {
    margin-left: 3px;
}
.tray-battery {
    margin-left: 12px;
}
.tray-sound {
    margin-left: 9px;
}
.tray-net {
    margin-left: 12px;
}
.tray-pen {
    margin-left: 15px;
}
.tray-lang {
    margin-left: 14px;
    width: 34px;
    font-family: "Open Sans", sans-serif;
    font-size: 15.5px;
}
.tray-clock {
    margin-left: 11px;
    width: 84px;
    display: flex;
    flex-direction: column;
    align-items: center;
    gap: 2px;
    font-family: "Open Sans", sans-serif;
    font-size: 16px;
    line-height: 18px;
}
.tray-notify {
    margin-left: 20px;
}
```
